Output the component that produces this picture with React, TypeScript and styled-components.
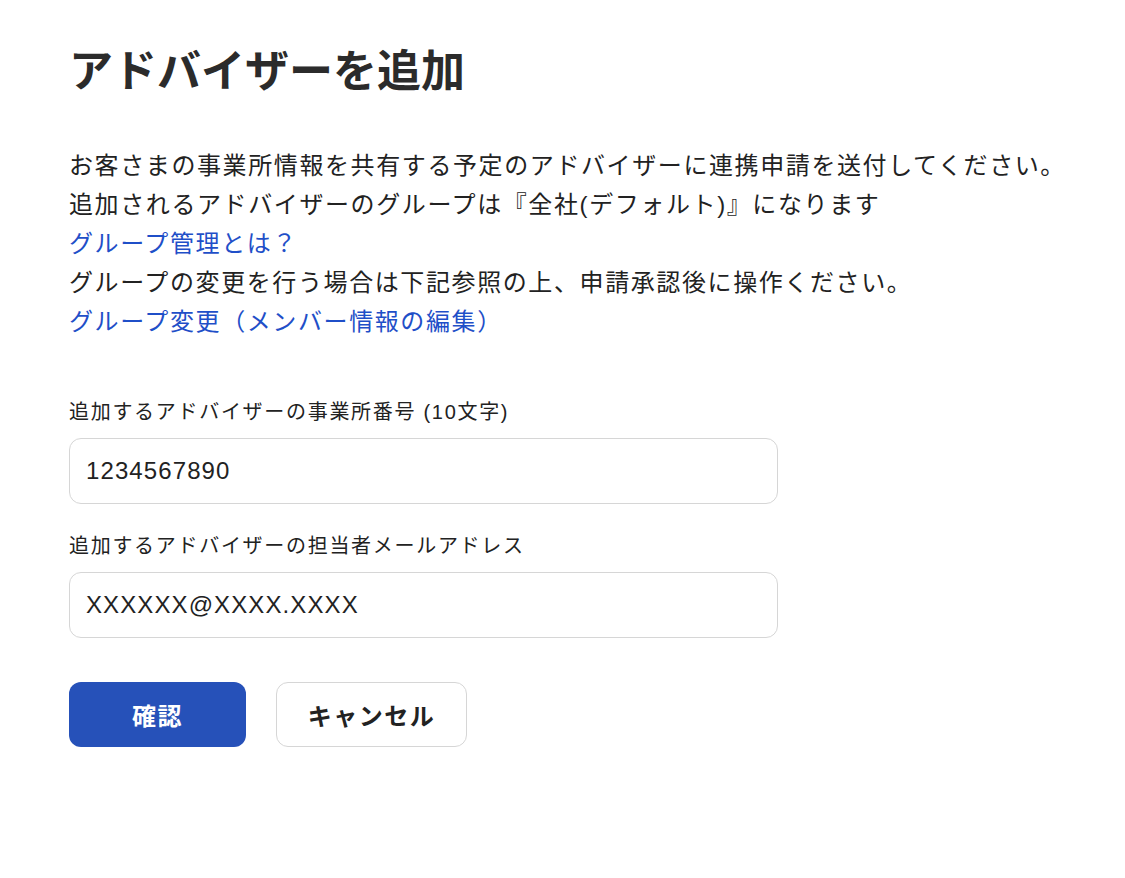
import styled, { createGlobalStyle } from 'styled-components';

const GlobalStyle = createGlobalStyle`
  body {
    margin: 0;
    background: #ffffff;
    font-family: 'Liberation Sans', 'Noto Sans CJK JP', sans-serif;
    color: #222222;
  }
`;

const StyledPage = styled.main`
  padding: 42px 0 0 69px;
`;

const StyledTitle = styled.h1`
  margin: 0 0 44px;
  font-size: 44px;
  line-height: 60px;
  font-weight: 700;
  color: #2b2b2b;
`;

const StyledIntro = styled.div`
  margin-bottom: 56px;

  p {
    margin: 0;
    font-size: 24px;
    line-height: 39px;
    letter-spacing: 1.6px;
  }
`;

const StyledLink = styled.a`
  display: block;
  font-size: 24px;
  line-height: 39px;
  letter-spacing: 1.6px;
  color: #1f4fc8;
  text-decoration: none;
`;

const StyledField = styled.div`
  margin-bottom: 27px;

  label {
    display: block;
    margin-bottom: 11px;
    font-size: 20px;
    line-height: 30px;
    letter-spacing: 1.7px;
    color: #222222;
  }

  input {
    box-sizing: border-box;
    display: block;
    width: 709px;
    height: 66px;
    padding: 0 16px;
    border: 1.5px solid #d6d6d6;
    border-radius: 12px;
    font-family: inherit;
    font-size: 24px;
    letter-spacing: 1.1px;
    color: #222222;
    outline: none;
  }
`;

const StyledActions = styled.div`
  display: flex;
  gap: 30px;
  margin-top: 44px;
`;

const StyledButton = styled.button<{ $primary?: boolean }>`
  box-sizing: border-box;
  width: ${(p) => (p.$primary ? '177px' : '191px')};
  height: 65px;
  border-radius: 12px;
  border: ${(p) => (p.$primary ? 'none' : '1.5px solid #d6d6d6')};
  background: ${(p) => (p.$primary ? '#2651b9' : '#ffffff')};
  color: ${(p) => (p.$primary ? '#ffffff' : '#222222')};
  font-family: inherit;
  font-size: 24px;
  font-weight: 700;
  letter-spacing: 1.5px;
  cursor: pointer;
`;

const App = () => {
  return (
    <>
      <GlobalStyle />
      <StyledPage>
        <StyledTitle>アドバイザーを追加</StyledTitle>
        <StyledIntro>
          <p>お客さまの事業所情報を共有する予定のアドバイザーに連携申請を送付してください。</p>
          <p>追加されるアドバイザーのグループは『全社(デフォルト)』になります</p>
          <StyledLink href="#">グループ管理とは？</StyledLink>
          <p>グループの変更を行う場合は下記参照の上、申請承認後に操作ください。</p>
          <StyledLink href="#">グループ変更（メンバー情報の編集）</StyledLink>
        </StyledIntro>
        <form onSubmit={(e) => e.preventDefault()}>
          <StyledField>
            <label htmlFor="office">追加するアドバイザーの事業所番号 (10文字)</label>
            <input id="office" type="text" defaultValue="1234567890" />
          </StyledField>
          <StyledField>
            <label htmlFor="email">追加するアドバイザーの担当者メールアドレス</label>
            <input id="email" type="email" defaultValue="XXXXXX@XXXX.XXXX" />
          </StyledField>
          <StyledActions>
            <StyledButton $primary type="submit">確認</StyledButton>
            <StyledButton type="button">キャンセル</StyledButton>
          </StyledActions>
        </form>
      </StyledPage>
    </>
  );
};

export default App;
